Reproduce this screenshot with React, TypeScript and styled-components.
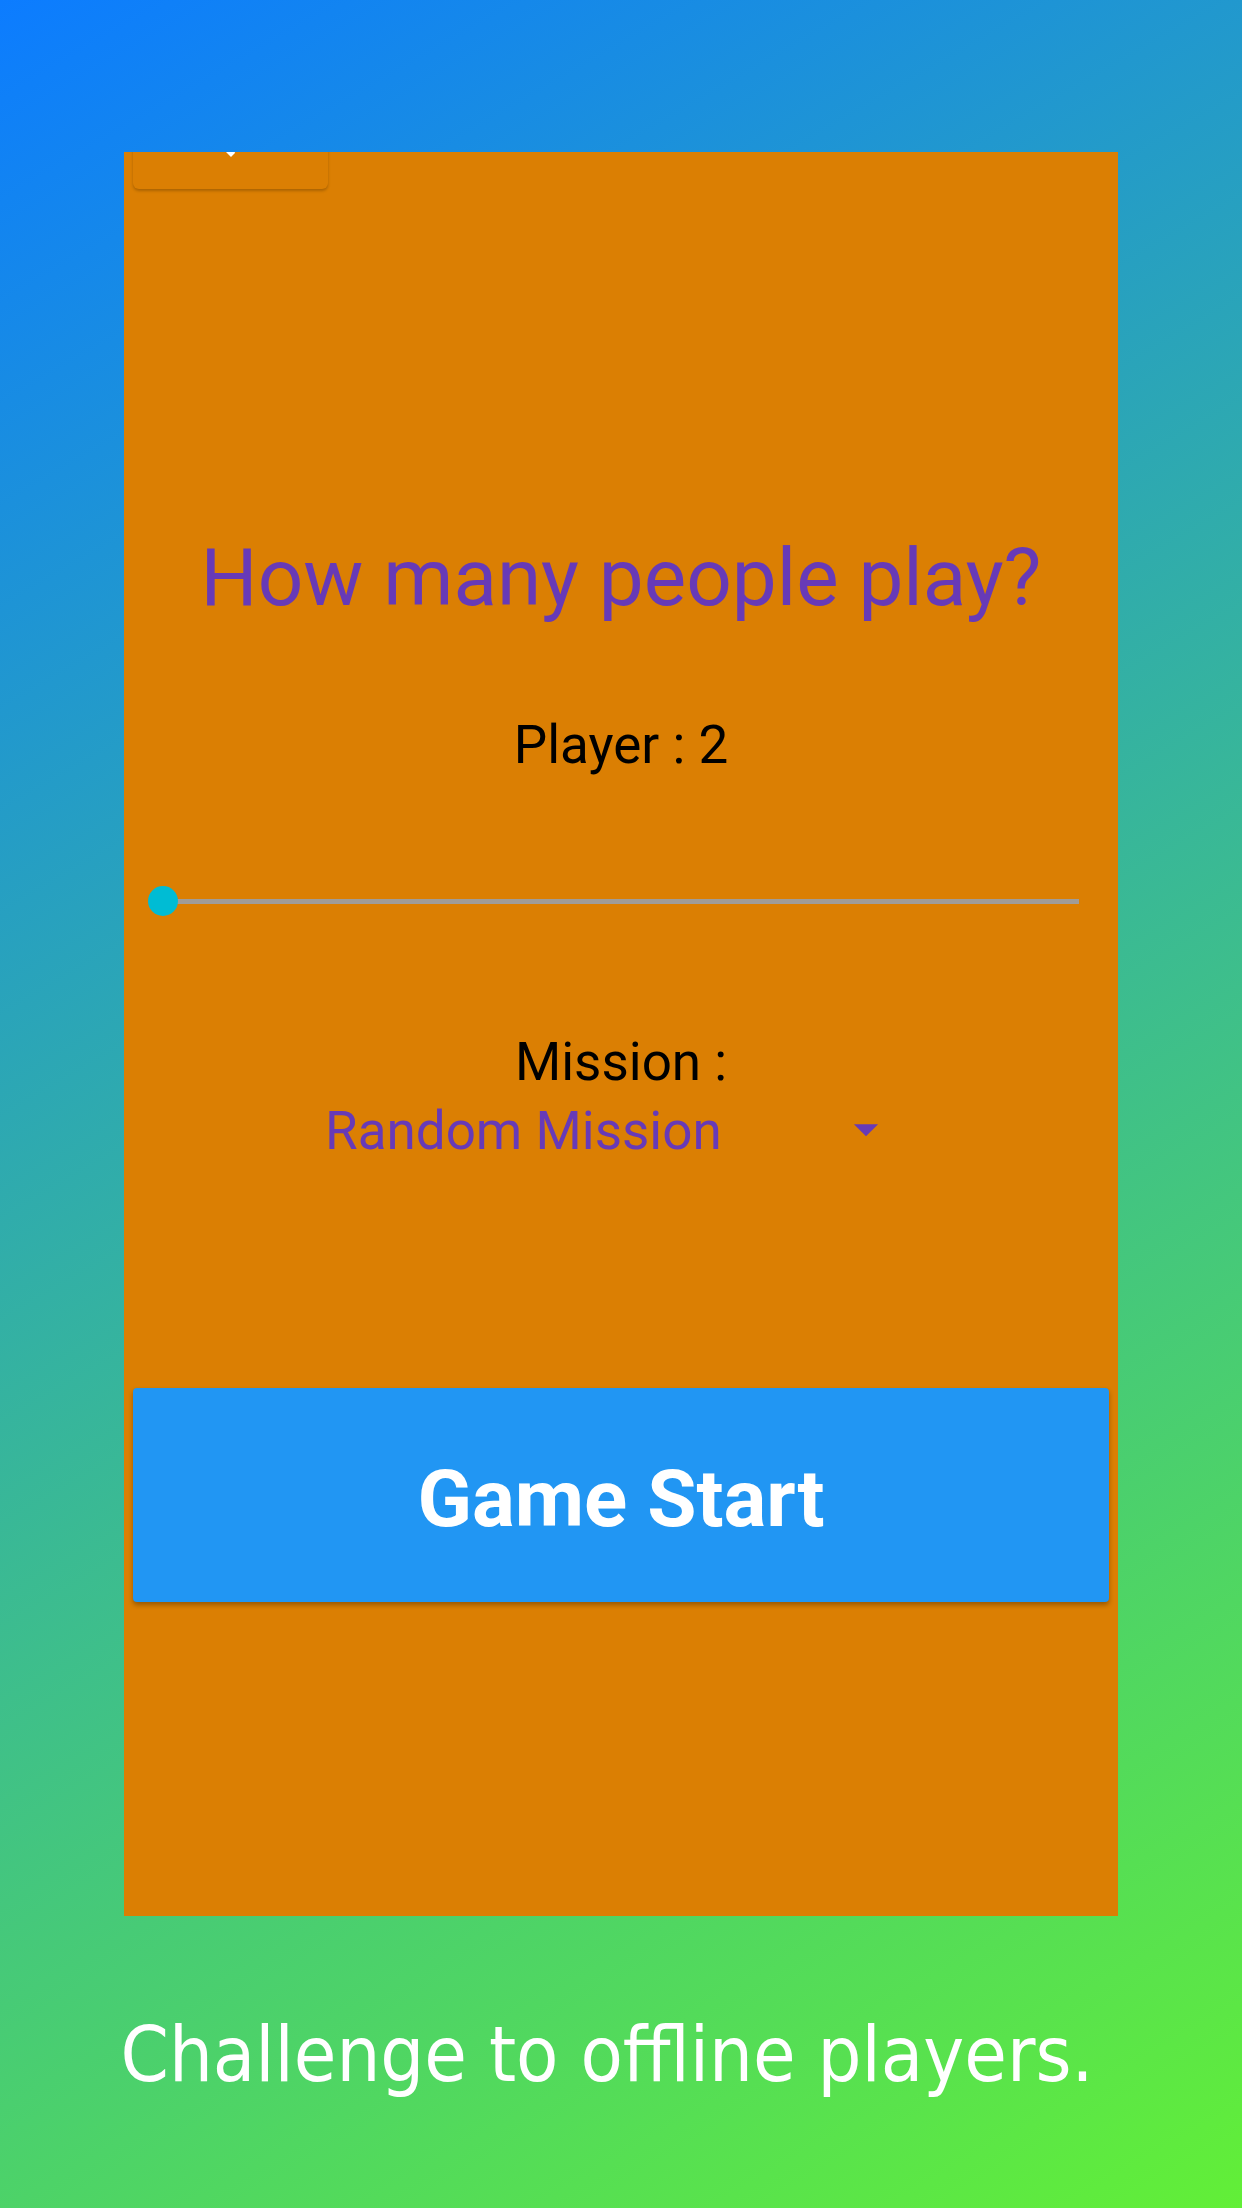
import React from "react";
import styled, { createGlobalStyle } from "styled-components";

const Global = createGlobalStyle`
  html, body { margin: 0; padding: 0; }
  body {
    width: 1242px;
    height: 2208px;
    overflow: hidden;
    font-family: Roboto, "Liberation Sans", sans-serif;
  }
`;

const Screen = styled.div`
  width: 1242px;
  height: 2208px;
  background: linear-gradient(150deg, #0c7cff 0%, #62ef37 100%);
  display: flex;
  flex-direction: column;
  align-items: center;
  padding-top: 152px;
  box-sizing: border-box;
`;

const Panel = styled.div`
  width: 994px;
  height: 1764px;
  background: #db7f03;
  overflow: hidden;
  display: flex;
  flex-direction: column;
  align-items: stretch;
`;

const TopBar = styled.div`
  display: flex;
  padding-left: 9px;
  margin-top: -75px;
`;

const BackButton = styled.div`
  width: 195px;
  height: 112px;
  border-radius: 6px;
  background: #db7f03;
  box-shadow: 0 2px 3px rgba(0, 0, 0, 0.22);
  display: flex;
  align-items: center;
  justify-content: center;
`;

const BackIcon = styled.svg`
  width: 72px;
  height: 72px;
  fill: #fff;
`;

const Title = styled.h1`
  margin: 342px 0 0;
  font-family: Roboto, "Liberation Sans", sans-serif;
  font-weight: 400;
  font-size: 80px;
  line-height: 94px;
  color: #673ab7;
  text-align: center;
`;

const Label = styled.div<{ $gap: number }>`
  margin-top: ${(p) => p.$gap}px;
  font-family: Roboto, "Liberation Sans", sans-serif;
  font-size: 53px;
  line-height: 61px;
  color: #000;
  text-align: center;
`;

const SliderArea = styled.div`
  margin: 110px 39px 0;
  height: 30px;
  display: flex;
  align-items: center;
  position: relative;
`;

const Track = styled.div`
  flex: 1;
  height: 5px;
  background: #a09c98;
`;

const Thumb = styled.div`
  position: absolute;
  left: -15px;
  top: 0;
  width: 30px;
  height: 30px;
  border-radius: 50%;
  background: #00bcd4;
`;

const DropdownWrap = styled.div`
  margin-top: 8px;
  display: flex;
  justify-content: center;
`;

const Dropdown = styled.div`
  width: 570px;
  margin-right: 22px;
  display: flex;
  align-items: center;
  justify-content: space-between;
`;

const DropdownText = styled.span`
  font-family: Roboto, "Liberation Sans", sans-serif;
  font-size: 53px;
  line-height: 61px;
  color: #673ab7;
`;

const ArrowIcon = styled.svg`
  width: 58px;
  height: 58px;
  margin-top: -5px;
  fill: #673ab7;
`;

const StartButton = styled.button`
  margin: 226px 9px 0;
  height: 214px;
  border: none;
  border-radius: 4px;
  background: #2196f3;
  box-shadow: 0 3px 5px rgba(0, 0, 0, 0.3);
  color: #fff;
  font-family: Roboto, "Liberation Sans", sans-serif;
  font-weight: 700;
  font-size: 80px;
  padding: 8px 0 0;
  display: flex;
  align-items: center;
  justify-content: center;
`;

const Caption = styled.p`
  margin: 94px 0 0;
  font-family: "DejaVu Sans Condensed", "DejaVu Sans", sans-serif;
  font-stretch: condensed;
  font-size: 77px;
  line-height: 90px;
  color: #fff;
  text-align: center;
  width: 1242px;
  padding-right: 28px;
  box-sizing: border-box;
`;

export default function App() {
  return (
    <>
      <Global />
      <Screen>
        <Panel>
          <TopBar>
            <BackButton>
              <BackIcon viewBox="0 0 24 24">
                <path d="M20 11H7.83l5.59-5.59L12 4l-8 8 8 8 1.41-1.41L7.83 13H20v-2z" />
              </BackIcon>
            </BackButton>
          </TopBar>
          <Title>How many people play?</Title>
          <Label $gap={90}>Player : 2</Label>
          <SliderArea>
            <Track />
            <Thumb />
          </SliderArea>
          <Label $gap={116}>Mission :</Label>
          <DropdownWrap>
            <Dropdown>
              <DropdownText>Random Mission</DropdownText>
              <ArrowIcon viewBox="0 0 24 24">
                <path d="M7 10l5 5 5-5z" />
              </ArrowIcon>
            </Dropdown>
          </DropdownWrap>
          <StartButton>Game Start</StartButton>
        </Panel>
        <Caption>Challenge to offline players.</Caption>
      </Screen>
    </>
  );
}
